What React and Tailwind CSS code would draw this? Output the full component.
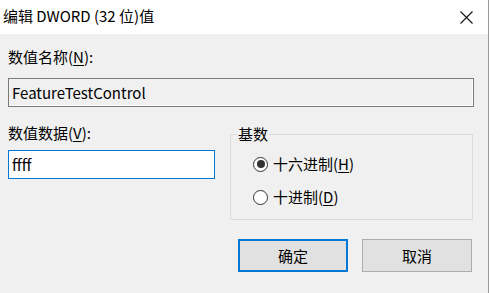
import React from 'react';

const font = { fontFamily: '"Segoe UI", "Noto Sans CJK SC", "Noto Sans", sans-serif' };

const U = ({ children }) => <span className="underline underline-offset-2">{children}</span>;

const Radio = ({ checked, children }) => (
    <div className="flex items-center h-[20px]">
        <span className="w-[15px] h-[15px] rounded-full border border-[#333] bg-white flex items-center justify-center">
            {checked && <span className="w-[8px] h-[8px] rounded-full bg-[#333]"></span>}
        </span>
        <span className="ml-[5px]">{children}</span>
    </div>
);

const App = () => {
    return (
        <div
            className="w-[489px] h-[293px] bg-[#f0f0f0] border-r border-[#9a9a9a] text-[15px] leading-[20px] text-black flex flex-col"
            style={font}
        >
            {/* Title bar */}
            <div className="h-[34px] bg-white flex items-center justify-between pl-[3px] pr-[15px] shrink-0">
                <span className="mt-[-2px]">编辑 DWORD (32 位)值</span>
                <svg width="13" height="13" viewBox="0 0 13 13" className="mr-[0px]">
                    <path d="M0.5 0.5 L12.5 12.5 M12.5 0.5 L0.5 12.5" stroke="#111" strokeWidth="1.1" />
                </svg>
            </div>

            <div className="pl-[8px] pt-[13px]">
                <div>数值名称(<U>N</U>):</div>
                <div className="mt-[11px] w-[466px] h-[29px] border border-[#7a7a7a] shadow-[inset_-1px_-1px_0_#ffffff] flex items-center pl-[3px]">
                    FeatureTestControl
                </div>

                <div className="flex mt-[16px] gap-[15px]">
                    <div className="w-[207px]">
                        <div>数值数据(<U>V</U>):</div>
                        <div className="mt-[7px] h-[29px] bg-white border border-[#0078d7] flex items-center pl-[3px]">
                            ffff
                        </div>
                    </div>
                    <fieldset className="w-[243px] h-[96px] mt-[1px] border border-[#dcdcdc] pl-[6px]">
                        <legend className="px-[1px]">基数</legend>
                        <div className="pl-[16px] pt-[10px] flex flex-col gap-[13px]">
                            <Radio checked>十六进制(<U>H</U>)</Radio>
                            <Radio>十进制(<U>D</U>)</Radio>
                        </div>
                    </fieldset>
                </div>

                <div className="flex gap-[14px] mt-[19px] ml-[230px]">
                    <button className="w-[110px] h-[33px] bg-[#e1e1e1] border-2 border-[#0078d7]">确定</button>
                    <button className="w-[110px] h-[33px] bg-[#e1e1e1] border border-[#adadad]">取消</button>
                </div>
            </div>
        </div>
    );
};

export default App;
